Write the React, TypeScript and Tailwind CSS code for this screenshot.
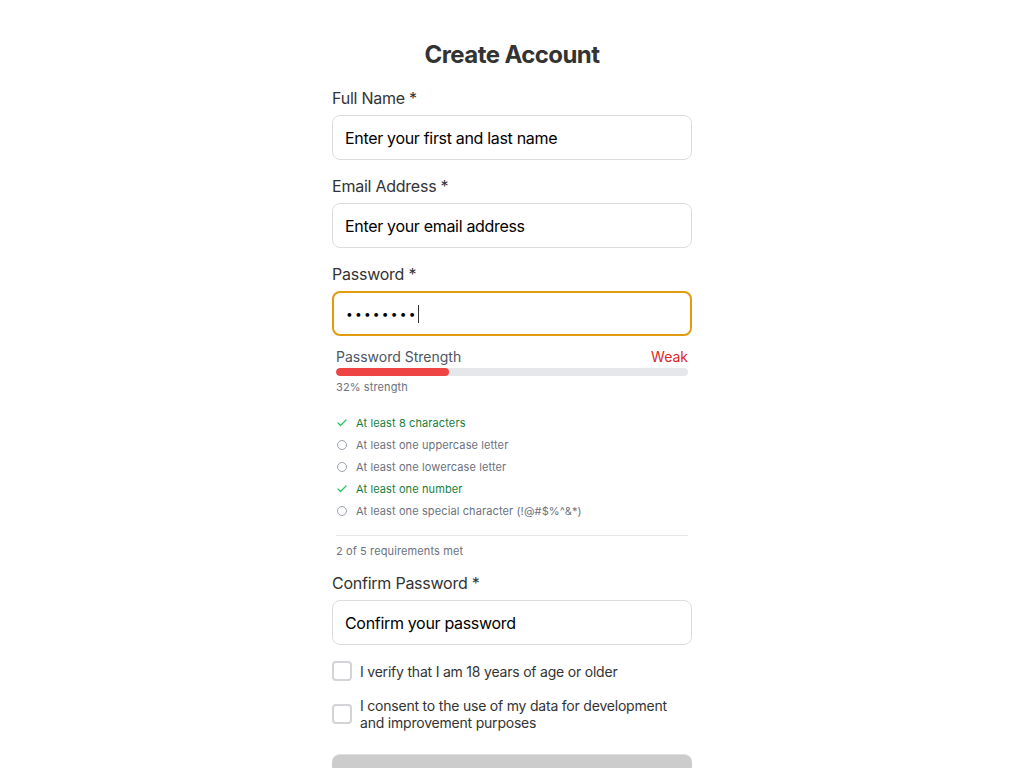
import { Check } from "lucide-react";

const requirements = [
  { label: "At least 8 characters", met: true },
  { label: "At least one uppercase letter", met: false },
  { label: "At least one lowercase letter", met: false },
  { label: "At least one number", met: true },
  { label: "At least one special character (!@#$%^&*)", met: false },
];

function Field({ label, placeholder }: { label: string; placeholder: string }) {
  return (
    <div className="mb-[14px]">
      <label className="block text-base leading-6 tracking-[-0.015em] text-[#333] mb-[5px]">{label}</label>
      <input
        placeholder={placeholder}
        className="w-full h-[45px] px-[12px] rounded-lg border border-[#dcdcdc] bg-white text-base tracking-[-0.02em] text-black placeholder:text-black outline-none"
      />
    </div>
  );
}

export default function App() {
  const strength = 32;
  return (
    <div className="min-h-screen bg-white font-['Inter',sans-serif]">
      <div className="w-[360px] mx-auto pt-[39px]">
        <h1 className="text-2xl leading-8 font-bold tracking-[-0.024em] text-[#333] text-center mb-[15px]">Create Account</h1>

        <Field label="Full Name *" placeholder="Enter your first and last name" />
        <Field label="Email Address *" placeholder="Enter your email address" />

        {/* Password */}
        <div>
          <label className="block text-base leading-6 tracking-[-0.015em] text-[#333] mb-[5px]">Password *</label>
          <div className="h-[45px] px-[12px] rounded-lg border-2 border-[#e39b0e] bg-white flex items-center">
            <span className="text-[12px] text-black tracking-[2.2px]">••••••••</span>
            <span className="w-px h-[18px] bg-[#333]" />
          </div>
        </div>

        {/* Strength */}
        <div className="px-1 mt-[11px]">
          <div className="flex justify-between text-sm leading-5">
            <span className="text-[#4b5563]">Password Strength</span>
            <span className="text-[#dc2626]">Weak</span>
          </div>
          <div className="h-2 mt-[1px] rounded-full bg-[#e5e7eb] overflow-hidden">
            <div className="h-full rounded-full bg-[#ef4444]" style={{ width: `${strength}%` }} />
          </div>
          <div className="text-[11px] leading-4 tracking-[0.01em] text-[#6b7280] mt-[3px]">{strength}% strength</div>

          <ul className="mt-5 flex flex-col gap-[6px]">
            {requirements.map(({ label, met }) => (
              <li key={label} className="flex items-center h-4 text-[11px] leading-4 tracking-[0.01em]">
                <span className="w-[20px] flex items-center">
                  {met ? (
                    <Check className="w-[12px] h-[12px] text-[#22c55e]" strokeWidth={2.4} />
                  ) : (
                    <span className="w-[10px] h-[10px] rounded-full border border-[#9ca3af] ml-[1px]" />
                  )}
                </span>
                <span className={met ? "text-[#15803d]" : "text-[#6b7280]"}>{label}</span>
              </li>
            ))}
          </ul>

          <div className="mt-4 border-t border-[#e5e7eb] pt-[7px] text-[11px] leading-4 tracking-[0.01em] text-[#6b7280]">
            2 of 5 requirements met
          </div>
        </div>

        <div className="mt-3">
          <label className="block text-base leading-6 tracking-[-0.015em] text-[#333] mb-[5px]">Confirm Password *</label>
          <input
            placeholder="Confirm your password"
            className="w-full h-[45px] px-[12px] rounded-lg border border-[#dcdcdc] bg-white text-base tracking-[-0.02em] text-black placeholder:text-black outline-none"
          />
        </div>

        <div className="mt-4 flex flex-col gap-4 tracking-[-0.013em]">
          <label className="flex items-center gap-2 text-sm leading-[17px] text-[#333]">
            <span className="w-5 h-5 shrink-0 rounded border-2 border-[#d4d4d8] bg-white" />
            I verify that I am 18 years of age or older
          </label>
          <label className="flex items-center gap-2 text-sm leading-[17px] text-[#333]">
            <span className="w-5 h-5 shrink-0 rounded border-2 border-[#d4d4d8] bg-white" />
            <span>I consent to the use of my data for development and improvement purposes</span>
          </label>
        </div>

        <button className="mt-[23px] w-full h-[45px] rounded-lg bg-[#cccccc] border-t border-[#e0e0e0]" />
      </div>
    </div>
  );
}
